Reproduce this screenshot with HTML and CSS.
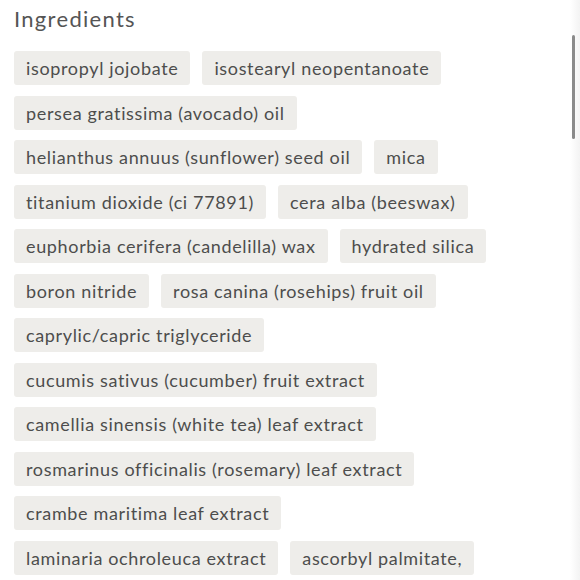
FILE: index.html
```html
<!DOCTYPE html>
<html>
<head>
<meta charset="utf-8">
<link rel="stylesheet" href="styles.css">
</head>
<body>
<div class="panel">
  <h2 class="title">Ingredients</h2>
  <ul class="tags">
    <li class="tag">isopropyl jojobate</li>
    <li class="tag">isostearyl neopentanoate</li>
    <li class="tag">persea gratissima (avocado) oil</li>
    <li class="tag">helianthus annuus (sunflower) seed oil</li>
    <li class="tag">mica</li>
    <li class="tag">titanium dioxide (ci 77891)</li>
    <li class="tag">cera alba (beeswax)</li>
    <li class="tag">euphorbia cerifera (candelilla) wax</li>
    <li class="tag">hydrated silica</li>
    <li class="tag">boron nitride</li>
    <li class="tag">rosa canina (rosehips) fruit oil</li>
    <li class="tag">caprylic/capric triglyceride</li>
    <li class="tag">cucumis sativus (cucumber) fruit extract</li>
    <li class="tag">camellia sinensis (white tea) leaf extract</li>
    <li class="tag">rosmarinus officinalis (rosemary) leaf extract</li>
    <li class="tag">crambe maritima leaf extract</li>
    <li class="tag">laminaria ochroleuca extract</li>
    <li class="tag">ascorbyl palmitate,</li>
  </ul>
  <div class="scrolltrack"><div class="scrollthumb"></div></div>
</div>
</body>
</html>
```
FILE: styles.css
```css
html, body {
  margin: 0;
  padding: 0;
  background: #ffffff;
  overflow: hidden;
}
.panel {
  position: relative;
  width: 580px;
  height: 580px;
  padding: 6px 14px 0 14px;
  box-sizing: border-box;
  font-family: Lato, "Open Sans", sans-serif;
  color: #4a4a4a;
}
.title {
  margin: 0 0 19px 0;
  font-size: 22px;
  font-weight: 400;
  line-height: 26px;
  letter-spacing: 1.3px;
  color: #555555;
}
.tags {
  list-style: none;
  margin: 0;
  padding: 0;
  display: flex;
  flex-wrap: wrap;
  column-gap: 12px;
  row-gap: 10.5px;
  width: 540px;
}
.tag {
  background: #eeedea;
  border-radius: 3px;
  padding: 0 12px;
  height: 34px;
  line-height: 34px;
  font-size: 18px;
  letter-spacing: 0.65px;
  color: #4d4d4d;
  white-space: nowrap;
}
.scrolltrack {
  position: absolute;
  top: 0;
  right: 0;
  width: 10px;
  height: 580px;
  background: linear-gradient(to right, #ffffff, #f3f3f3);
}
.scrollthumb {
  position: absolute;
  top: 35px;
  left: 2px;
  width: 3px;
  height: 104px;
  border-radius: 2px;
  background: #8a8a8a;
}
```
